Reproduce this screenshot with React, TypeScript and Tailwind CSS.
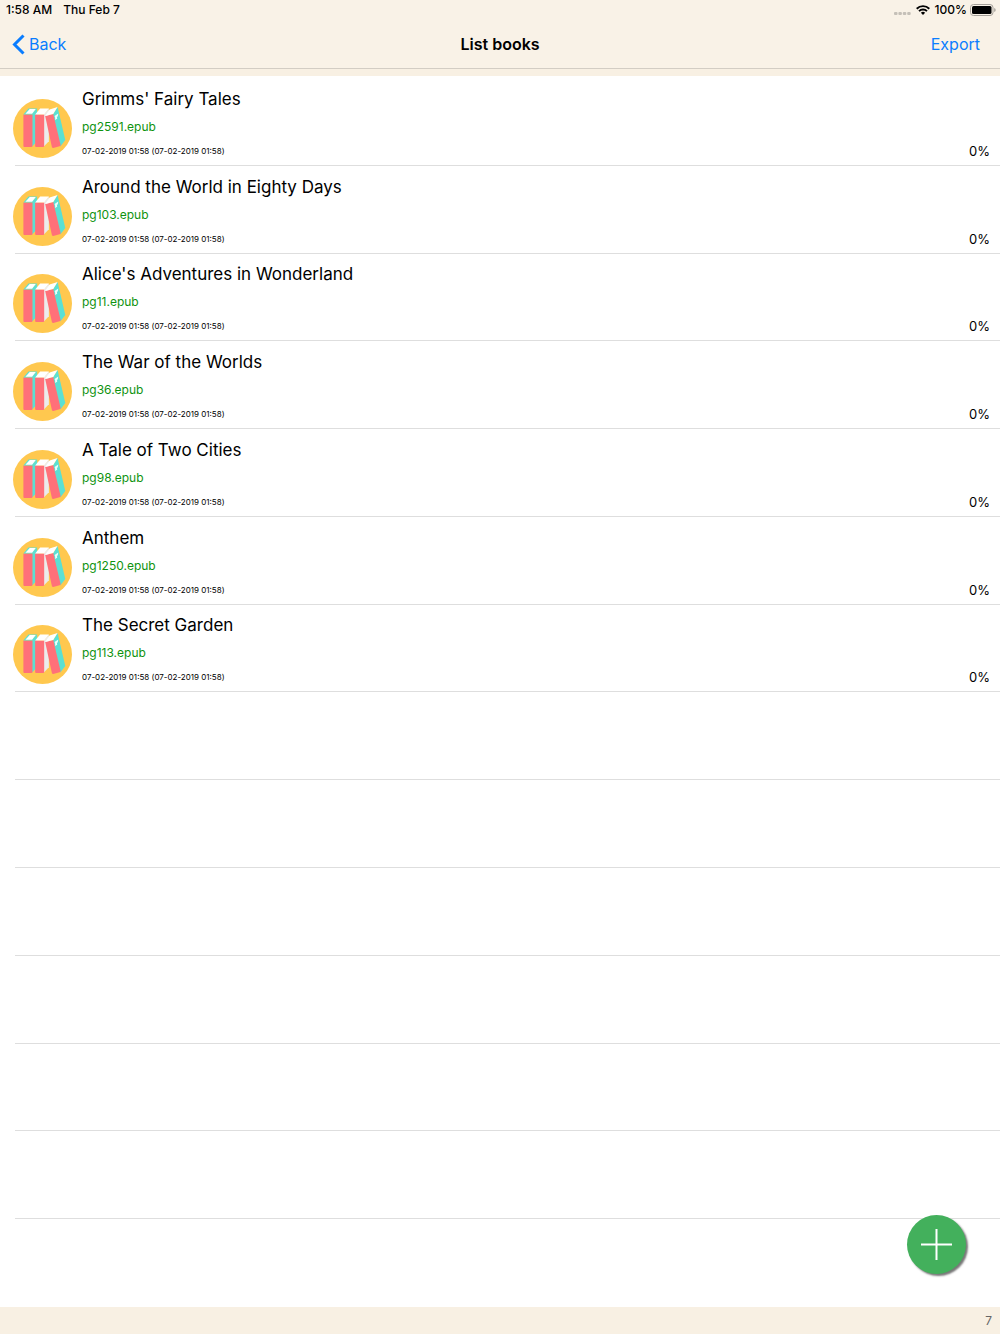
const books = [
  { title: "Grimms' Fairy Tales", file: 'pg2591.epub' },
  { title: 'Around the World in Eighty Days', file: 'pg103.epub' },
  { title: "Alice's Adventures in Wonderland", file: 'pg11.epub' },
  { title: 'The War of the Worlds', file: 'pg36.epub' },
  { title: 'A Tale of Two Cities', file: 'pg98.epub' },
  { title: 'Anthem', file: 'pg1250.epub' },
  { title: 'The Secret Garden', file: 'pg113.epub' },
];

const emptyRows = [1, 2, 3, 4, 5, 6, 7];

const BooksIcon = () => (
  <svg viewBox="0 0 176 176" className="mb-px size-[59px] shrink-0" aria-hidden="true">
    <circle cx="88" cy="88" r="88" fill="#ffc84f" />
    <path d="M57 46l15-18v98l-15 16z" fill="#5be0d3" />
    <path d="M31 46h27v94q0 3-3 3H34q-3 0-3-3z" fill="#ff7079" />
    <path d="M31 46l15-18h26L58 46z" fill="#5be0d3" />
    <path d="M37 44l13-14h18L57 44z" fill="#fff" />
    <path d="M92 46l15-18v98l-15 16z" fill="#ececec" />
    <path d="M66 46h27v94q0 3-3 3H69q-3 0-3-3z" fill="#ff7079" />
    <path d="M66 46l15-18h26L93 46z" fill="#fff" />
    <path d="M119 46l14-22 23 98-15 20z" fill="#5be0d3" />
    <path d="M96 51l24-6 22 92q0 3-3 4l-19 5q-3 0-4-3z" fill="#ff7079" />
    <path d="M96 51l13-20 24-7-13 21z" fill="#fff" />
    <path d="M124 51l11-8-1 7-3 5 1 4-7 4 1-6z" fill="#e6fffb" />
  </svg>
);

const StatusBar = () => (
  <div className="flex h-5 items-center justify-between pr-1 pl-[6px] text-xs leading-5 font-medium">
    <div className="flex gap-[11px]">
      <span>1:58 AM</span>
      <span>Thu Feb 7</span>
    </div>
    <div className="flex items-center gap-[5px]">
      <svg viewBox="0 0 17 4" className="mt-2 h-1 w-[17px]" fill="#c5c0b8" aria-hidden="true">
        <rect x="0" width="3.5" height="3" rx="1" />
        <rect x="4.4" width="3.5" height="3" rx="1" />
        <rect x="8.8" width="3.5" height="3" rx="1" />
        <rect x="13.2" width="3.5" height="3" rx="1" />
      </svg>
      <svg viewBox="0 0 14 10" className="h-[10px] w-[14px]" fill="none" stroke="#000" strokeWidth="1.9" aria-hidden="true">
        <path d="M.7 3.7a9 9 0 0 1 12.6 0" />
        <path d="M3 6.1a5.7 5.7 0 0 1 8 0" />
        <path d="M7 10L4.9 7.8a3 3 0 0 1 4.2 0z" fill="#000" stroke="none" />
      </svg>
      <div className="flex items-center gap-[3px]">
        <span>100%</span>
        <svg viewBox="0 0 26 12" className="h-3 w-[26px]" aria-hidden="true">
          <rect x=".5" y=".5" width="22.5" height="11" rx="3" fill="none" stroke="#a5a099" />
          <rect x="2" y="2" width="19.5" height="8" rx="1.5" fill="#000" />
          <path d="M24.2 4q1.5.6 1.5 2t-1.5 2z" fill="#a5a099" />
        </svg>
      </div>
    </div>
  </div>
);

export default function App() {
  return (
    <div className="flex min-h-screen flex-col bg-[#f8f0e3] font-[Inter,sans-serif] text-black">
      <header className="border-b border-[#d3cdc4] bg-[#f9f2e7]">
        <StatusBar />
        <nav className="grid h-12 grid-cols-3 items-center px-3 text-base">
          <a href="#back" className="flex items-center gap-1 justify-self-start text-[#0a7dff]">
            <svg viewBox="0 0 13 21" className="h-[21px] w-[13px]" fill="none" stroke="currentColor" strokeWidth="3" aria-hidden="true">
              <path d="M11.5 1.5L2.5 10.5l9 9" />
            </svg>
            Back
          </a>
          <h1 className="justify-self-center font-semibold">List books</h1>
          <button type="button" className="justify-self-end pr-2 text-[#0a7dff]">
            Export
          </button>
        </nav>
      </header>

      <main className="mt-[7px] flex grow flex-col bg-white pt-[2px]">
        <ul className="grid grow auto-rows-fr pl-[15px]">
          {books.map((book) => (
            <li key={book.file} className="-ml-[2px] flex flex-col">
              <div className="flex grow items-end gap-[10px] pr-[10px] pb-[6px]">
                <BooksIcon />
                <div className="flex grow flex-col">
                  <h2 className="text-[17px] leading-6">{book.title}</h2>
                  <p className="mt-2 text-xs leading-4 text-[#0f930f]">{book.file}</p>
                  <p className="mt-2 text-[8px] leading-4">07-02-2019 01:58 (07-02-2019 01:58)</p>
                </div>
                <span className="text-[13px] leading-4">0%</span>
              </div>
              <div className="ml-[2px] h-px bg-[#dedede]" />
            </li>
          ))}
          {emptyRows.map((row) => (
            <li key={row} aria-hidden="true" className="min-h-20 border-b border-[#dedede] last:border-b-0" />
          ))}
        </ul>
      </main>

      <footer className="h-[27px] pr-2 text-right text-xs leading-[27px] text-[#666]">{books.length}</footer>

      <button
        type="button"
        aria-label="Add book"
        className="fixed right-[34px] bottom-[60px] flex size-[59px] items-center justify-center rounded-full bg-[#43b05c] shadow-[2px_2px_2px_#777]"
      >
        <svg viewBox="0 0 31 31" className="size-[31px]" stroke="#fff" strokeWidth="2" aria-hidden="true">
          <path d="M15.5 0v31M0 15.5h31" />
        </svg>
      </button>
    </div>
  );
}
